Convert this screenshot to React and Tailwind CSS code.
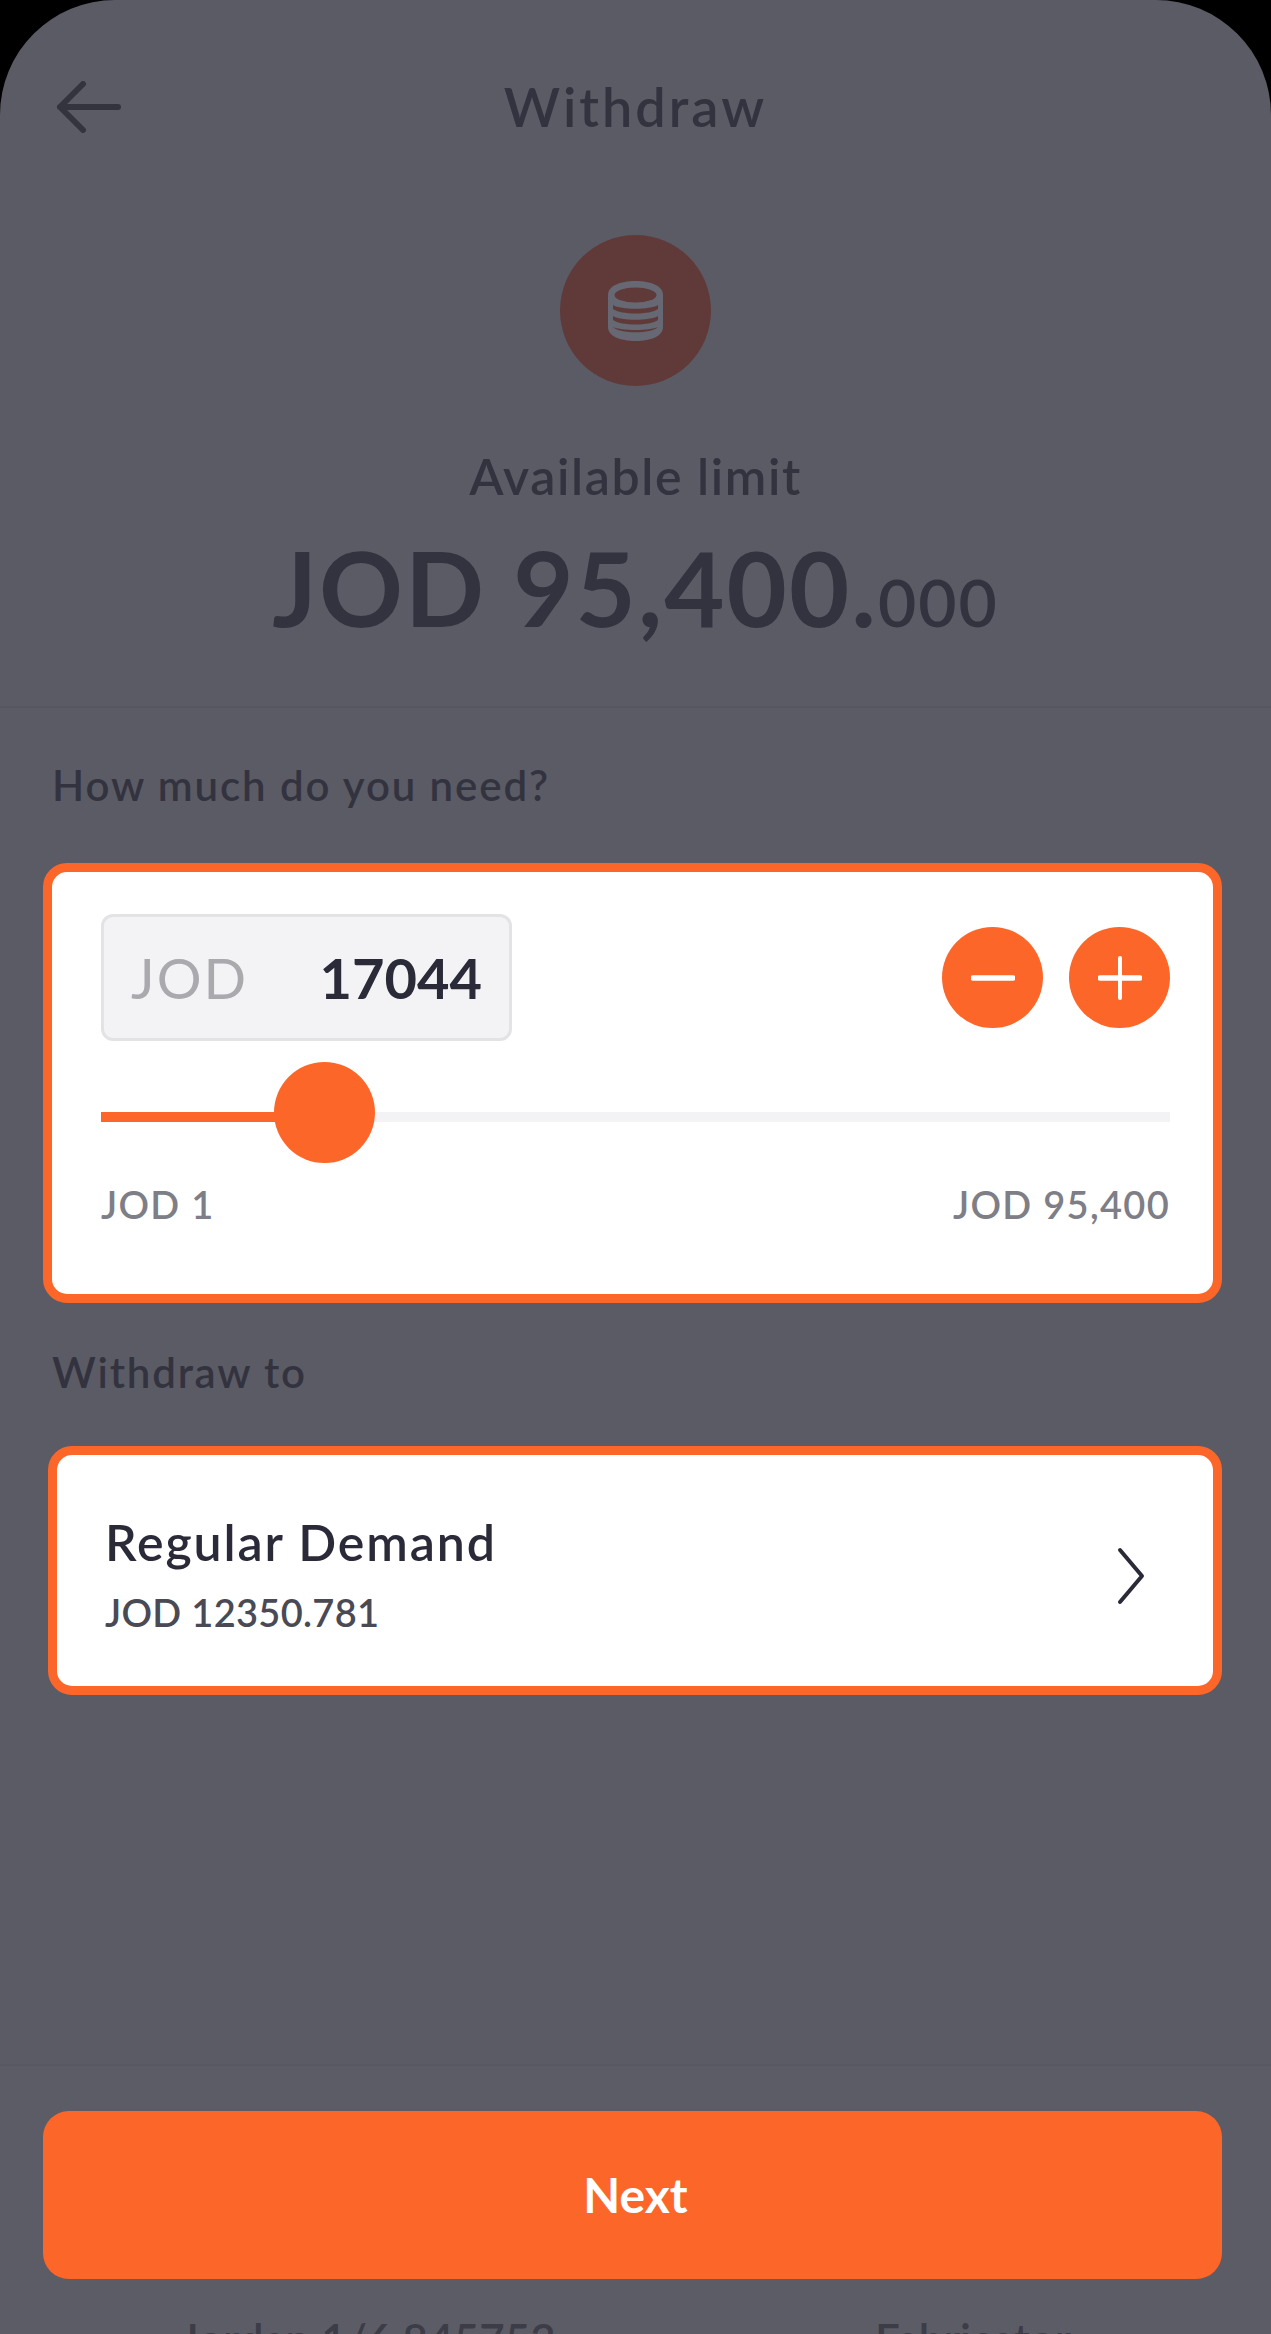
const font = { fontFamily: 'Lato, "Open Sans", sans-serif' };

function BackArrow() {
  return (
    <svg width="66" height="52" viewBox="0 0 66 52" fill="none" stroke="#34343f" strokeWidth="6" strokeLinecap="round" strokeLinejoin="round">
      <path d="M62 26H4M27 3L4 26l23 23" />
    </svg>
  );
}

function CoinStack() {
  return (
    <svg width="55" height="60" viewBox="0 0 55 60">
      <path d="M0 14C0 5 12 0 27.5 0S55 5 55 14V46C55 55 43 60 27.5 60S0 55 0 46Z" fill="#666873" />
      <ellipse cx="27.5" cy="14" rx="21" ry="7.5" fill="#603a39" />
      <path d="M5 24C13 29 42 29 50 24V28C42 34 13 34 5 28Z" fill="#603a39" />
      <path d="M5 35C13 40 42 40 50 35V39C42 45 13 45 5 39Z" fill="#603a39" />
      <path d="M5 46C13 50 42 50 50 46C44 53 11 53 5 46Z" fill="#603a39" />
    </svg>
  );
}

function RoundButton({ plus }) {
  return (
    <button className="flex h-[101px] w-[101px] items-center justify-center rounded-full bg-[#fd6629]">
      <svg width="44" height="44" viewBox="0 0 44 44" fill="none" stroke="#ffffff" strokeLinecap="round">
        <path d="M2 22H42" strokeWidth="5.5" />
        {plus && <path d="M22 2V42" strokeWidth="4" />}
      </svg>
    </button>
  );
}

export default function App() {
  return (
    <div className="h-[2334px] w-[1271px] overflow-hidden bg-black" style={font}>
      <div className="flex h-full flex-col overflow-hidden rounded-t-[115px] bg-[#5b5b65] text-[#33333f]">
        <section className="h-[708px] shrink-0 border-b-2 border-[#565660]">
          <div className="grid h-[214px] grid-cols-[1fr_auto_1fr] items-center">
            <div className="pl-[56px]">
              <BackArrow />
            </div>
            <h1 className="text-[54px] leading-none font-semibold tracking-[3px]">Withdraw</h1>
          </div>
          <div className="mt-[21px] flex flex-col items-center">
            <div className="flex h-[151px] w-[151px] items-center justify-center rounded-full bg-[#603a39]">
              <CoinStack />
            </div>
            <p className="mt-[64px] text-[50px] leading-[52px] font-semibold tracking-[1.6px]">Available limit</p>
            <p className="mt-[30px] text-[104px] leading-[110px] font-bold tracking-[2px]">
              JOD 95,400.<span className="text-[66px] font-semibold">000</span>
            </p>
          </div>
        </section>

        <main className="pr-[49px] pl-[43px]">
          <p className="mt-[54px] pl-[9px] text-[42px] leading-[46px] font-semibold tracking-[1.9px]">How much do you need?</p>

          <div className="mt-[55px] h-[440px] rounded-[24px] border-[9px] border-[#fd6629] bg-white pt-[42px] pr-[43px] pl-[49px]">
            <div className="flex items-center justify-between">
              <div className="flex h-[127px] w-[411px] items-center justify-between rounded-[12px] border-[3px] border-[#e3e3e6] bg-[#f3f3f5] pr-[27px] pl-[27px]">
                <span className="text-[56px] tracking-[2px] text-[#a9a9ae]">JOD</span>
                <span className="text-[56px] font-bold text-[#2a2a38]">17044</span>
              </div>
              <div className="flex gap-[26px]">
                <RoundButton />
                <RoundButton plus />
              </div>
            </div>

            <div className="relative mt-[21px] h-[101px]">
              <div className="absolute top-[50px] right-0 left-0 h-[10px] bg-[#f3f3f6]" />
              <div className="absolute top-[50px] left-0 h-[10px] w-[223px] bg-[#fd6629]" />
              <div className="absolute top-0 left-[173px] h-[101px] w-[101px] rounded-full bg-[#fd6629]" />
            </div>

            <div className="mt-[19px] flex justify-between text-[38px] leading-[44px] font-semibold tracking-[1.3px] text-[#7e7e87]">
              <span>JOD 1</span>
              <span>JOD 95,400</span>
            </div>
          </div>

          <p className="mt-[46px] pl-[9px] text-[42px] leading-[46px] font-semibold tracking-[1.8px]">Withdraw to</p>

          <div className="mt-[51px] ml-[5px] flex h-[249px] items-center justify-between rounded-[24px] border-[9px] border-[#fd6629] bg-white pr-[68px] pl-[48px]">
            <div className="mt-[6px]">
              <p className="text-[50px] leading-[56px] font-semibold tracking-[1.9px] text-[#2a2a38]">Regular Demand</p>
              <p className="mt-[20px] text-[38px] leading-[44px] font-semibold tracking-[0.3px] text-[#4a4a55]">JOD 12350.781</p>
            </div>
            <svg className="mt-[10px]" width="28" height="58" viewBox="0 0 28 58" fill="none" stroke="#2a2a38" strokeWidth="4" strokeLinecap="round" strokeLinejoin="round">
              <path d="M3 3L25 29L3 55" />
            </svg>
          </div>
        </main>

        <footer className="mt-auto h-[270px] shrink-0 border-t-2 border-[#585862] bg-[#5c5c66] pt-[45px] pr-[49px] pl-[43px]">
          <button className="h-[168px] w-full rounded-[26px] bg-[#fd6629] pl-[6px] text-[48px] font-bold text-white">Next</button>
          <div className="mt-[35px] flex text-[44px] leading-[50px] font-semibold text-[#3d3d48]">
            <span className="ml-[137px]">Jordan 1/6,845753</span>
            <span className="mr-[151px] ml-auto">Fabricator</span>
          </div>
        </footer>
      </div>
    </div>
  );
}
